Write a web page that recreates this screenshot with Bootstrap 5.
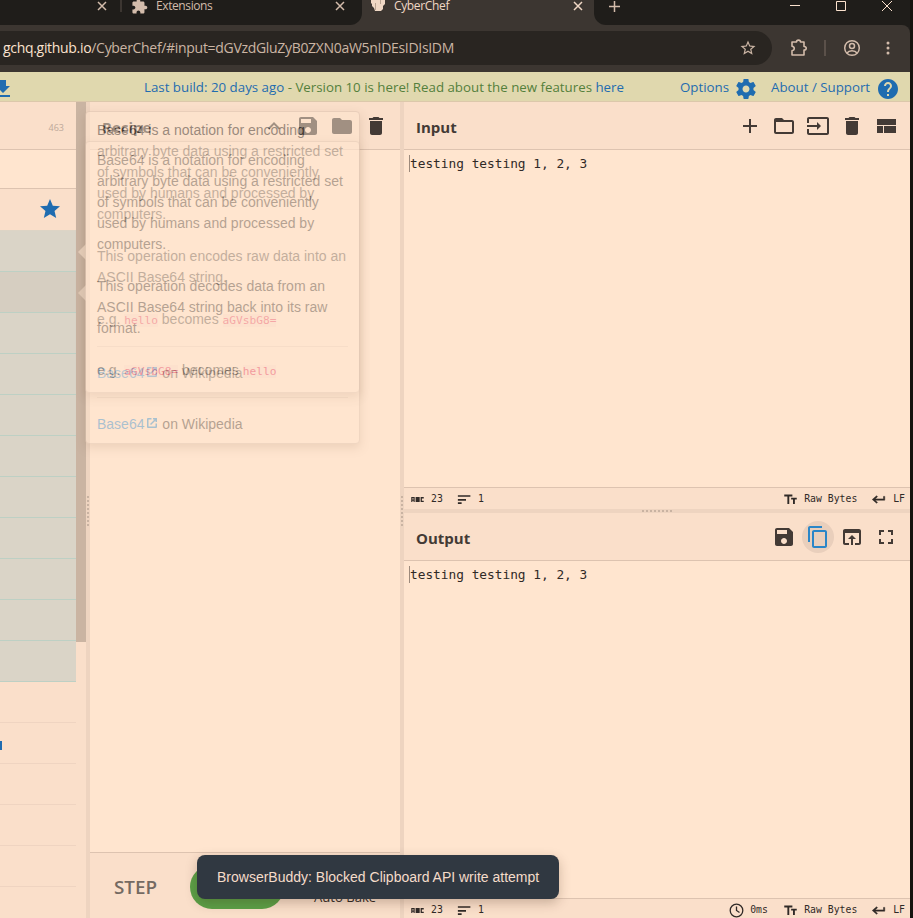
<!DOCTYPE html>
<html lang="en">
<head>
<meta charset="utf-8">
<meta name="viewport" content="width=device-width, initial-scale=1">
<title>CyberChef</title>
<link href="https://cdn.jsdelivr.net/npm/bootstrap@5.3.0/dist/css/bootstrap.min.css" rel="stylesheet">
<style>
:root{--ink:#433a35;--pane:#ffe5cf;--head:#fadfca;--rule:#ddc3b0;--gut:#eed4c0;--link:#1f6cb0;--mono:"DejaVu Sans Mono","Liberation Mono",monospace}
body{width:913px;height:918px;overflow:hidden;background:#15130f;font-family:"Open Sans","Noto Sans",sans-serif;color:var(--ink)}
svg{display:block;fill:currentColor;flex:none}
.ic{width:24px;height:24px}
.win{width:910px;height:918px}
.strip{height:25px;background:#3c3631;color:#d3bcab;font-size:12px;line-height:12px}
.strip .dark{background:#1f1d1a;height:25px}
.dark-l{width:362px;border-radius:0 0 12px 0}
.dark-r{width:316px;border-radius:0 0 0 12px}
.tab-on{width:232px;color:#f0d8c5}
.slot{height:12px}
.bar{height:47px;background:#3c3631;color:#d3bcab;border-radius:0 8px 0 0;padding-top:6px}
.url{width:772px;height:34px;background:#292521;border-radius:0 17px 17px 0;padding:0 15px 0 3px;font-size:14px;color:#cbb5a4}
.url b{font-weight:400;color:#fbe2ce}
.url span{letter-spacing:-.31px;padding-bottom:1px}
.banner{height:30px;background:#e0d8ae;border-bottom:1px solid #dcc8ab;color:var(--link);font-size:13.3px;white-space:nowrap}
.banner .grn{color:#54803c}
.banner>span{padding-top:2px}
.work{height:816px}
.ops{width:76px;background:var(--head)}
.ops-head{height:48px;border-bottom:1px solid var(--rule);font-size:9px;color:#bda99a;padding-right:12px}
.ops-find{height:39px;background:var(--pane);border-bottom:1px solid var(--rule)}
.ops-fav{height:42px;color:var(--link);padding:0 14px 2px 0;border-bottom:1px solid #ddd4c5}
.op{height:41px;background:#dad4c7;border-bottom:1px solid #bdd0c4}
.op.hov{background:#d6cec1}
.cat{height:41px;border-bottom:1px solid #efd4c1;overflow:hidden}
.cat i{display:block;width:2px;height:9px;background:var(--link)}
.scroller{width:10px;background:var(--head)}
.scroller div{height:540px;background:#cab4a2}
.gv{width:4px;background:var(--gut)}
.gh{height:4px;background:var(--gut)}
.dots-v{width:2px;height:30px;margin-top:2px;background:repeating-linear-gradient(#c9b3a2 0 2px,transparent 2px 4px)}
.dots-h{height:2px;width:30px;background:repeating-linear-gradient(90deg,#c9b3a2 0 2px,transparent 2px 4px)}
.recipe{width:310px;background:var(--pane)}
.io{width:506px;background:var(--pane);overflow:hidden}
.io>div{flex:none}
.head{height:48px;background:var(--head);border-bottom:1px solid var(--rule);padding:3px 12px 0;font-size:15px;font-weight:700}
.tools{gap:10px;margin-top:-2px}
.text{height:337px;font:12.8px/18px var(--mono);color:#302a27;padding:5px 5px 0;white-space:pre}
.text::before{content:"";display:inline-block;width:1px;height:17px;background:#9c8a7c;vertical-align:-4px}
.foot{background:var(--head);border-top:1px solid var(--rule);font:9.8px/12px var(--mono);color:#302a27;height:22px;padding:1px 5px 0 6px}
.foot svg{width:15px;height:15px}
.copy{width:32px;height:32px;margin:0 -4px;border-radius:50%;background:#e9cfbc;color:#2a86c8}
.controls{height:66px;background:var(--head);border-top:1px solid var(--rule);padding-left:24px}
.step{font-size:18.8px;font-weight:600;color:#746a62;width:76px;padding-top:3px}
.bake{width:94px;height:44px;border-radius:22px;background:#5ba047;margin-top:3px}
.auto{font-size:13.1px;color:#302a27;padding-top:25px;margin-left:30px}
.pop{left:85px;width:275px;background:var(--pane);border:1px solid #d9bfac;border-radius:4px;box-shadow:0 4px 10px rgba(90,50,20,.28);padding:8px 11px;font:14px/21px "Liberation Sans",Arial,sans-serif;color:#3d3530}
.pop p{margin:0 0 21px}
.pop hr{margin:-5px 0 16px;border-color:#a58e7f}
.pop code{font:11.2px var(--mono);color:#e0204e;background:#fbdcca}
.pop a{color:#1f87d0;text-decoration:none}
.pop a svg{display:inline-block;width:12px;height:12px;margin-left:2px;vertical-align:0}
.pop::before{content:"";position:absolute;left:-8px;top:132px;border:8px solid transparent;border-right-color:var(--pane);border-left:0}
.pop-a{top:111px;height:282px;opacity:.5}
.pop-b{top:141px;height:303px;opacity:.38}
.pop-b::before{top:143px}
.note{left:197px;top:855px;width:362px;height:44px;border-radius:8px;background:#303841;color:#f5dcca;font:14px/44px "Liberation Sans",Arial,sans-serif;padding-left:20px;box-shadow:0 4px 12px rgba(60,30,10,.25);white-space:nowrap}
</style>
</head>
<body>
<svg class="d-none">
<symbol id="save" viewBox="0 0 24 24"><path d="M17 3H5c-1.11 0-2 .9-2 2v14c0 1.1.89 2 2 2h14c1.1 0 2-.9 2-2V7l-4-4zm-5 16c-1.66 0-3-1.34-3-3s1.34-3 3-3 3 1.34 3 3-1.34 3-3 3zm3-10H5V5h10v4z"/></symbol>
<symbol id="trash" viewBox="0 0 24 24"><path d="M6 19c0 1.1.9 2 2 2h8c1.1 0 2-.9 2-2V7H6v12zM19 4h-3.5l-1-1h-5l-1 1H5v2h14V4z"/></symbol>
<symbol id="size" viewBox="0 0 24 24"><path d="M2 4v3h5v12h3V7h5V4H2zm20 5h-9v3h3v7h3v-7h3V9z"/></symbol>
<symbol id="ret" viewBox="0 0 24 24"><path d="M20 7v4H6.800l3.600-3.600L9 6l-7 6 7 6 1.400-1.400L6.800 13H22V7z" stroke="currentColor" stroke-width=".8"/></symbol>
<symbol id="sort" viewBox="0 0 24 24"><path d="M3 19h6v-2.500H3V19zM3 5v2.500h20V5H3zm0 8.800h13V11H3v2.800z"/></symbol>
<symbol id="abc" viewBox="0 0 24 24"><path d="M2 8h5.500v8H5.700v-2H3.800v2H2zm1.800 1.800v2h1.900v-2zM9 8h6.500v8H9zm8 0h5v2.200h-3v3.600h3V16h-5z" fill-rule="evenodd"/></symbol>
<symbol id="x" viewBox="0 0 10 10"><path d="M1 1l8 8M9 1l-8 8" fill="none" stroke="currentColor" stroke-width="1.500"/></symbol>
</svg>
<div class="win d-flex flex-column">
  <div class="strip d-flex">
    <div class="dark dark-l d-flex">
      <div class="slot d-flex align-items-center" style="width:122px;padding-left:97px;border-right:2px solid #3c3631"><svg width="10" height="10"><use href="#x"/></svg></div>
      <div class="slot d-flex align-items-center" style="padding-left:9px">
        <svg width="17" height="17" viewBox="0 0 24 24"><path d="M20.500 11H19V7c0-1.100-.9-2-2-2h-4V3.500C13 2.120 11.880 1 10.500 1S8 2.120 8 3.500V5H4c-1.100 0-1.990.9-1.990 2v3.800H3.500c1.490 0 2.700 1.210 2.700 2.700s-1.210 2.700-2.700 2.700H2V20c0 1.100.9 2 2 2h3.800v-1.500c0-1.490 1.210-2.700 2.700-2.700s2.700 1.210 2.700 2.700V22H17c1.100 0 2-.9 2-2v-4h1.500c1.380 0 2.500-1.120 2.500-2.500S21.880 11 20.500 11z"/></svg>
        <span style="margin-left:8px;width:179px;letter-spacing:-.4px">Extensions</span>
        <svg width="10" height="10"><use href="#x"/></svg>
      </div>
    </div>
    <div class="tab-on d-flex"><div class="slot d-flex align-items-center" style="padding-left:8px">
      <svg width="16" height="14" viewBox="0 0 16 14"><path d="M1 0h14v5l-2 2v3l-2 2H5L4 9 2 7V5L1 4z"/><path d="M5 4h1v7H5zM10 0h1v5h-1z" fill="#b9a391"/></svg>
      <span style="margin-left:8px;width:179px;letter-spacing:-.35px">CyberChef</span>
      <svg width="10" height="10"><use href="#x"/></svg></div>
    </div>
    <div class="dark dark-r d-flex"><div class="slot d-flex align-items-center" style="color:#fbe2ce">
      <svg style="margin-left:15px" width="11" height="11" viewBox="0 0 11 11"><path d="M5.500 0v11M0 5.500h11" stroke="#d3bcab" stroke-width="1.500"/></svg>
      <svg style="margin-left:170px" width="10" height="10" viewBox="0 0 10 10"><path d="M0 4h10v1H0z"/></svg>
      <svg style="margin-left:36px" width="10" height="10" viewBox="0 0 10 10"><path d="M.5.5h9v9h-9z" fill="none" stroke="currentColor"/></svg>
      <svg style="margin-left:36px" width="10" height="10" viewBox="0 0 10 10"><path d="M0 0l10 10M10 0L0 10" stroke="currentColor"/></svg></div>
    </div>
  </div>
  <div style="background:#1f1d1a"><div class="bar d-flex">
    <div class="url d-flex align-items-center justify-content-between"><span><b>gchq.github.io</b>/CyberChef/#input=dGVzdGluZyB0ZXN0aW5nIDEsIDIsIDM</span>
      <svg width="18" height="18" viewBox="0 0 24 24"><path d="M22 9.240l-7.190-.62L12 2 9.190 8.630 2 9.240l5.460 4.730L5.820 21 12 17.270 18.180 21l-1.630-7.030L22 9.240zM12 15.400l-3.760 2.270 1-4.280-3.320-2.880 4.380-.38L12 6.100l1.710 4.040 4.380.38-3.320 2.880 1 4.280L12 15.400z"/></svg></div>
    <div class="d-flex align-items-center" style="height:34px">
      <svg style="margin-left:18px" width="18" height="18" viewBox="0 0 18 18"><path d="M2 3h4.500C6.500.5 10.500.5 10.500 3H14v4.500c3 0 3 3.500 0 3.500v5H2v-4.300c3-.5 3-3.900 0-4.400z" fill="none" stroke="currentColor" stroke-width="1.600" stroke-linejoin="round"/></svg>
      <i style="margin-left:16px;width:2px;height:16px;background:#5b514a"></i>
      <svg style="margin-left:17px" width="18" height="18" viewBox="0 0 18 18"><g fill="none" stroke="currentColor" stroke-width="1.500"><circle cx="9" cy="9" r="7.300"/><circle cx="9" cy="7" r="2.500"/><path d="M4 14c2-3 8-3 10 0"/></g></svg>
      <svg style="margin-left:25px" width="4" height="14" viewBox="0 0 4 14"><circle cx="2" cy="2" r="1.500"/><circle cx="2" cy="7" r="1.500"/><circle cx="2" cy="12" r="1.500"/></svg>
    </div>
  </div></div>
  <div class="banner d-flex align-items-center">
    <svg class="ic" style="margin-left:-9px;margin-top:4px" viewBox="0 0 24 24"><path d="M19 9h-4V3H9v6H5l7 7 7-7zM5 18v2h14v-2H5z"/></svg>
    <span style="margin-left:129px;width:536px">Last build: 20 days ago <span class="grn">- Version 10 is here! Read about the new features</span> here</span>
    <span style="width:54px">Options</span>
    <svg class="ic" style="margin-top:4px" viewBox="0 0 24 24"><path d="M19.430 12.980c.04-.32.07-.64.07-.98s-.03-.66-.07-.98l2.110-1.650c.19-.15.24-.42.12-.64l-2-3.460c-.12-.22-.39-.3-.61-.22l-2.490 1c-.52-.4-1.080-.73-1.690-.98l-.38-2.650C14.460 2.180 14.250 2 14 2h-4c-.25 0-.46.18-.49.42l-.38 2.650c-.61.25-1.170.59-1.690.98l-2.490-1c-.23-.09-.49 0-.61.22l-2 3.460c-.13.22-.07.49.12.64l2.110 1.650c-.04.32-.07.65-.07.98s.03.66.07.98l-2.110 1.650c-.19.15-.24.42-.12.64l2 3.460c.12.22.39.3.61.22l2.490-1c.52.4 1.080.73 1.690.98l.38 2.650c.03.24.24.42.49.42h4c.25 0 .46-.18.49-.42l.38-2.650c.61-.25 1.170-.59 1.690-.98l2.490 1c.23.09.49 0 .61-.22l2-3.460c.12-.22.07-.49-.12-.64l-2.110-1.650zM12 15.500c-1.930 0-3.500-1.570-3.500-3.500s1.570-3.500 3.500-3.500 3.500 1.570 3.500 3.500-1.570 3.500-3.500 3.500z"/></svg>
    <span style="margin-left:13px;width:105px">About / Support</span>
    <svg class="ic" style="margin-top:4px" viewBox="0 0 24 24"><path d="M12 2C6.480 2 2 6.480 2 12s4.480 10 10 10 10-4.480 10-10S17.520 2 12 2zm1 17h-2v-2h2v2zm2.070-7.750l-.9.920C13.450 12.900 13 13.500 13 15h-2v-.5c0-1.100.45-2.100 1.170-2.830l1.240-1.260c.37-.36.59-.86.59-1.410 0-1.100-.9-2-2-2s-2 .9-2 2H8c0-2.210 1.790-4 4-4s4 1.790 4 4c0 .88-.36 1.680-.93 2.250z"/></svg>
  </div>
  <div class="work d-flex">
    <div class="ops">
      <div class="ops-head d-flex align-items-center justify-content-end"><span class="pt-1">463</span></div>
      <div class="ops-find"></div>
      <div class="ops-fav d-flex align-items-center justify-content-end"><svg class="ic" viewBox="0 0 24 24"><path d="M12 17.270L18.180 21l-1.640-7.030L22 9.240l-7.190-.61L12 2 9.190 8.630 2 9.240l5.460 4.730L5.820 21z"/></svg></div>
      <div class="op"></div><div class="op hov"></div><div class="op"></div><div class="op"></div><div class="op"></div><div class="op"></div><div class="op"></div><div class="op"></div><div class="op"></div><div class="op"></div><div class="op"></div>
      <div class="cat"></div><div class="cat d-flex align-items-center pt-1"><i></i></div><div class="cat"></div><div class="cat"></div><div class="cat"></div>
    </div>
    <div class="scroller"><div></div></div>
    <div class="gv d-flex align-items-center justify-content-center"><div class="dots-v"></div></div>
    <div class="recipe d-flex flex-column">
      <div class="head d-flex align-items-center justify-content-between"><span>Recipe</span>
        <div class="tools d-flex">
          <svg class="ic" viewBox="0 0 24 24"><path d="M7.410 15.410L12 10.830l4.590 4.580L18 14l-6-6-6 6z"/></svg>
          <svg class="ic"><use href="#save"/></svg>
          <svg class="ic" viewBox="0 0 24 24"><path d="M10 4H4c-1.100 0-1.990.9-1.990 2L2 18c0 1.100.9 2 2 2h16c1.100 0 2-.9 2-2V8c0-1.100-.9-2-2-2h-8l-2-2z"/></svg>
          <svg class="ic"><use href="#trash"/></svg>
        </div></div>
      <div class="flex-grow-1"></div>
      <div class="controls d-flex align-items-center"><div class="step">STEP</div><div class="bake"></div><div class="auto">Auto Bake</div></div>
    </div>
    <div class="gv d-flex align-items-center justify-content-center"><div class="dots-v"></div></div>
    <div class="io d-flex flex-column">
      <div class="head d-flex align-items-center justify-content-between"><span>Input</span>
        <div class="tools d-flex">
          <svg class="ic" viewBox="0 0 24 24"><path d="M19 13h-6v6h-2v-6H5v-2h6V5h2v6h6v2z"/></svg>
          <svg class="ic" viewBox="0 0 24 24"><path d="M20 6h-8l-2-2H4c-1.100 0-1.990.9-1.990 2L2 18c0 1.100.9 2 2 2h16c1.100 0 2-.9 2-2V8c0-1.100-.9-2-2-2zm0 12H4V8h16v10z"/></svg>
          <svg class="ic" viewBox="0 0 24 24"><path d="M21 3.010H3c-1.100 0-2 .9-2 2V9h2V4.990h18v14.030H3V15H1v4.010c0 1.100.9 1.980 2 1.980h18c1.100 0 2-.88 2-1.980v-14c0-1.110-.9-2-2-2zM11 16l4-4-4-4v3H1v2h10v3z"/></svg>
          <svg class="ic"><use href="#trash"/></svg>
          <svg class="ic" viewBox="0 0 24 24"><path d="M3 19h6v-7H3v7zm7 0h12v-7H10v7zM3 5v6h19V5H3z"/></svg>
        </div></div>
      <div class="text">testing testing 1, 2, 3</div>
      <div class="foot d-flex align-items-center">
        <svg><use href="#abc"/></svg><span style="margin-left:6px;width:25px">23</span><svg><use href="#sort"/></svg><span style="margin-left:7px">1</span>
        <svg class="ms-auto"><use href="#size"/></svg><span style="margin-left:6px;width:67px">Raw Bytes</span><svg><use href="#ret"/></svg><span style="margin-left:7px">LF</span>
      </div>
      <div class="gh d-flex align-items-center justify-content-center"><div class="dots-h"></div></div>
      <div class="head d-flex align-items-center justify-content-between"><span>Output</span>
        <div class="tools d-flex align-items-center">
          <svg class="ic"><use href="#save"/></svg>
          <div class="copy d-flex align-items-center justify-content-center"><svg class="ic" viewBox="0 0 24 24"><path d="M16 1H4c-1.100 0-2 .9-2 2v14h2V3h12V1zm3 4H8c-1.100 0-2 .9-2 2v14c0 1.100.9 2 2 2h11c1.100 0 2-.9 2-2V7c0-1.100-.9-2-2-2zm0 16H8V7h11v14z"/></svg></div>
          <svg class="ic" viewBox="0 0 24 24"><path d="M19 4H5c-1.110 0-2 .9-2 2v12c0 1.100.89 2 2 2h4v-2H5V8h14v10h-4v2h4c1.100 0 2-.9 2-2V6c0-1.100-.89-2-2-2zm-7 6l-4 4h3v6h2v-6h3l-4-4z"/></svg>
          <svg class="ic" viewBox="0 0 24 24"><path d="M7 14H5v5h5v-2H7v-3zm-2-4h2V7h3V5H5v5zm12 7h-3v2h5v-5h-2v3zM14 5v2h3v3h2V5h-5z"/></svg>
        </div></div>
      <div class="text">testing testing 1, 2, 3</div>
      <div class="foot d-flex align-items-center">
        <svg><use href="#abc"/></svg><span style="margin-left:6px;width:25px">23</span><svg><use href="#sort"/></svg><span style="margin-left:7px">1</span>
        <svg class="ms-auto" viewBox="0 0 15 15"><circle cx="7.500" cy="7.500" r="6.300" fill="none" stroke="currentColor" stroke-width="1.300"/><path d="M7.500 3.500v4l3 2" fill="none" stroke="currentColor" stroke-width="1.300"/></svg><span style="margin-left:6px;width:33px">0ms</span>
        <svg><use href="#size"/></svg><span style="margin-left:6px;width:67px">Raw Bytes</span><svg><use href="#ret"/></svg><span style="margin-left:7px">LF</span>
      </div>
    </div>
  </div>
</div>
<div class="pop pop-a position-absolute">
  <p>Base64 is a notation for encoding arbitrary byte data using a restricted set of symbols that can be conveniently used by humans and processed by computers.</p>
  <p>This operation encodes raw data into an ASCII Base64 string.</p>
  <p>e.g. <code>hello</code> becomes <code>aGVsbG8=</code></p>
  <hr><div><a href="#">Base64<svg viewBox="0 0 24 24"><path d="M19 19H5V5h6V2H4a2 2 0 0 0-2 2v16a2 2 0 0 0 2 2h16a2 2 0 0 0 2-2v-7h-3zM14 2v3h3l-9 9 2 2 9-9v3h3V2z"/></svg></a> on Wikipedia</div>
</div>
<div class="pop pop-b position-absolute">
  <p>Base64 is a notation for encoding arbitrary byte data using a restricted set of symbols that can be conveniently used by humans and processed by computers.</p>
  <p>This operation decodes data from an ASCII Base64 string back into its raw format.</p>
  <p>e.g. <code>aGVsbG8=</code> becomes <code>hello</code></p>
  <hr><div><a href="#">Base64<svg viewBox="0 0 24 24"><path d="M19 19H5V5h6V2H4a2 2 0 0 0-2 2v16a2 2 0 0 0 2 2h16a2 2 0 0 0 2-2v-7h-3zM14 2v3h3l-9 9 2 2 9-9v3h3V2z"/></svg></a> on Wikipedia</div>
</div>
<div class="note position-absolute">BrowserBuddy: Blocked Clipboard API write attempt</div>
<script src="https://cdn.jsdelivr.net/npm/bootstrap@5.3.0/dist/js/bootstrap.bundle.min.js"></script>
</body>
</html>
